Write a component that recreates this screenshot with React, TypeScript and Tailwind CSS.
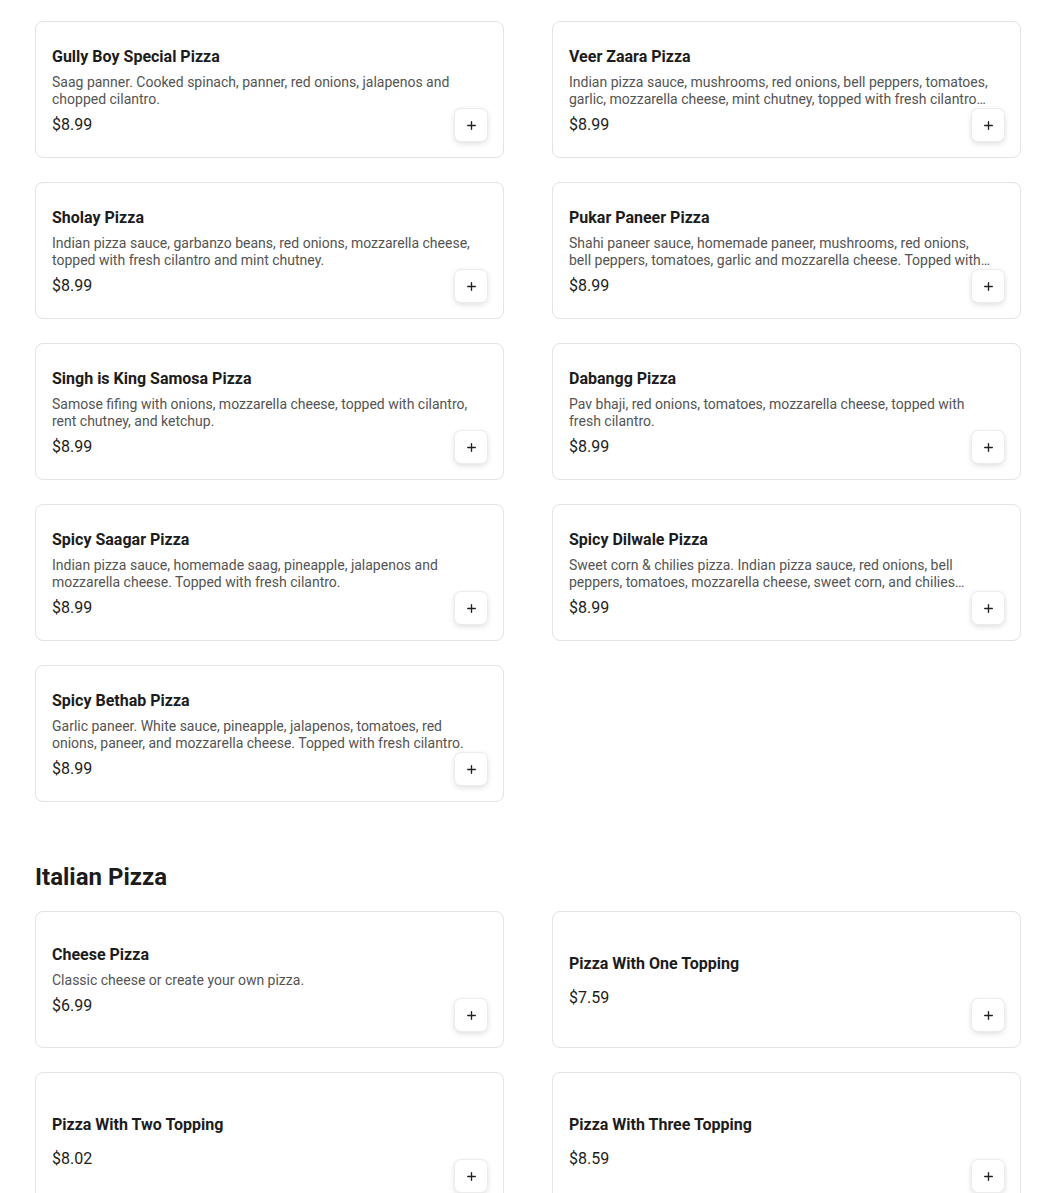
import { Plus } from 'lucide-react';

type MenuItem = {
  name: string;
  description?: string;
  price: string;
};

const indianPizzas: MenuItem[] = [
  {
    name: 'Gully Boy Special Pizza',
    description: 'Saag panner. Cooked spinach, panner, red onions, jalapenos and chopped cilantro.',
    price: '$8.99',
  },
  {
    name: 'Veer Zaara Pizza',
    description:
      'Indian pizza sauce, mushrooms, red onions, bell peppers, tomatoes, garlic, mozzarella cheese, mint chutney, topped with fresh cilantro and ginger.',
    price: '$8.99',
  },
  {
    name: 'Sholay Pizza',
    description:
      'Indian pizza sauce, garbanzo beans, red onions, mozzarella cheese, topped with fresh cilantro and mint chutney.',
    price: '$8.99',
  },
  {
    name: 'Pukar Paneer Pizza',
    description:
      'Shahi paneer sauce, homemade paneer, mushrooms, red onions, bell peppers, tomatoes, garlic and mozzarella cheese. Topped with fresh cilantro.',
    price: '$8.99',
  },
  {
    name: 'Singh is King Samosa Pizza',
    description: 'Samose fifing with onions, mozzarella cheese, topped with cilantro, rent chutney, and ketchup.',
    price: '$8.99',
  },
  {
    name: 'Dabangg Pizza',
    description: 'Pav bhaji, red onions, tomatoes, mozzarella cheese, topped with fresh cilantro.',
    price: '$8.99',
  },
  {
    name: 'Spicy Saagar Pizza',
    description: 'Indian pizza sauce, homemade saag, pineapple, jalapenos and mozzarella cheese. Topped with fresh cilantro.',
    price: '$8.99',
  },
  {
    name: 'Spicy Dilwale Pizza',
    description:
      'Sweet corn & chilies pizza. Indian pizza sauce, red onions, bell peppers, tomatoes, mozzarella cheese, sweet corn, and chilies topped with fresh cilantro.',
    price: '$8.99',
  },
  {
    name: 'Spicy Bethab Pizza',
    description:
      'Garlic paneer. White sauce, pineapple, jalapenos, tomatoes, red onions, paneer, and mozzarella cheese. Topped with fresh cilantro.',
    price: '$8.99',
  },
];

const italianPizzas: MenuItem[] = [
  { name: 'Cheese Pizza', description: 'Classic cheese or create your own pizza.', price: '$6.99' },
  { name: 'Pizza With One Topping', price: '$7.59' },
  { name: 'Pizza With Two Topping', price: '$8.02' },
  { name: 'Pizza With Three Topping', price: '$8.59' },
];

const MenuCard = ({ item }: { item: MenuItem }) => (
  <div className="relative flex h-[137px] flex-col justify-center rounded-lg border border-[#e3e3e3] bg-white px-4 pt-[2px]">
    <h3 className="text-base leading-5 font-bold text-[#1c1c1c]">{item.name}</h3>
    <p className="mt-[7px] mb-[7px] line-clamp-2 max-w-[424px] text-sm leading-[17px] text-[#545454]">
      {item.description}
    </p>
    <span className="text-base leading-5 text-[#1c1c1c]">{item.price}</span>
    <button className="absolute right-[16px] bottom-4 flex h-8 w-8 items-center justify-center rounded-md bg-white text-[#222] shadow-[0_2px_6px_rgba(0,0,0,0.16)] ring-1 ring-[#ececec]">
      <Plus size={13} strokeWidth={2.5} />
    </button>
  </div>
);

const App = () => {
  return (
    <div className="min-h-screen bg-white pt-[21px] pr-[30px] pl-[35px] font-['Roboto','Liberation_Sans',sans-serif]">
      <section className="grid grid-cols-[469px_469px] gap-x-12 gap-y-6">
        {indianPizzas.map((item) => (
          <MenuCard key={item.name} item={item} />
        ))}
      </section>

      <h2 className="mt-[59px] mb-[18px] text-2xl leading-8 font-bold text-[#1c1c1c]">Italian Pizza</h2>
      <section className="grid grid-cols-[469px_469px] gap-x-12 gap-y-6 pb-10">
        {italianPizzas.map((item) => (
          <MenuCard key={item.name} item={item} />
        ))}
      </section>
    </div>
  );
};

export default App;
